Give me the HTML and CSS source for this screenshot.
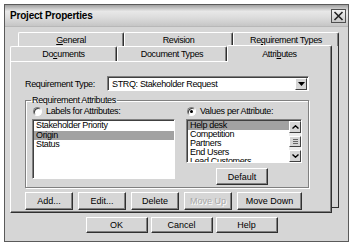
FILE: index.html
```html
<!DOCTYPE html>
<html lang="en">
<head>
    <meta charset="UTF-8">
    <title>Project Properties</title>
    <link rel="stylesheet" href="styles.css">
</head>
<body>
    <div class="window">
        <div class="titlebar">
            <span class="title">Project Properties</span>
            <span class="close">
                <svg width="11" height="10" viewBox="0 0 11 10"><path d="M1.5 1 L9.5 9 M9.5 1 L1.5 9" stroke="#222" stroke-width="1.6" fill="none"/></svg>
            </span>
        </div>
        <div class="dialog">
            <div class="tabset">
                <div class="tabrow back">
                    <div class="tab tab-general"><span><u>G</u>eneral</span></div>
                    <div class="tab tab-revision"><span>Revision</span></div>
                    <div class="tab tab-types"><span>Re<u>q</u>uirement Types</span></div>
                </div>
                <div class="stack">
                    <div class="tabrow front">
                        <div class="tab tab-docs"><span>Do<u>c</u>uments</span></div>
                        <div class="tab tab-doctypes"><span>Document Types</span></div>
                        <div class="tab tab-attrs selected"><span>Attri<u>b</u>utes</span></div>
                    </div>
                    <div class="panel">
                        <div class="req-row">
                            <label class="req-label">Requirement Type:</label>
                            <div class="combo">
                                <span class="combo-text">STRQ: Stakeholder Request</span>
                                <span class="combo-btn">
                                    <svg width="7" height="4" viewBox="0 0 7 4"><path d="M0 0 H7 L3.5 4 Z" fill="#000"/></svg>
                                </span>
                            </div>
                        </div>
                        <fieldset class="group">
                            <legend>Requirement Attributes</legend>
                            <div class="group-cols">
                                <div class="col col-left">
                                    <div class="radio-row"><span class="radio"></span>Labels for Attributes:</div>
                                    <div class="listbox list-left">
                                        <div class="item">Stakeholder Priority</div>
                                        <div class="item selected">Origin</div>
                                        <div class="item">Status</div>
                                    </div>
                                </div>
                                <div class="col col-right">
                                    <div class="radio-row"><span class="radio checked"></span>Values per Attribute:</div>
                                    <div class="listbox list-right">
                                        <div class="list-items">
                                            <div class="item selected">Help desk</div>
                                            <div class="item">Competition</div>
                                            <div class="item">Partners</div>
                                            <div class="item">End Users</div>
                                            <div class="item">Lead Customers</div>
                                        </div>
                                        <div class="scrollbar">
                                            <span class="sb-btn"><svg width="7" height="4" viewBox="0 0 7 4"><path d="M0.5 3.5 L3.5 0.8 L6.5 3.5" stroke="#000" stroke-width="1.4" fill="none"/></svg></span>
                                            <span class="sb-track"><span class="sb-thumb"><svg width="5" height="5" viewBox="0 0 5 5"><path d="M0 0.5 H5 M0 2.5 H5 M0 4.5 H5" stroke="#666" stroke-width="1"/></svg></span></span>
                                            <span class="sb-btn"><svg width="7" height="4" viewBox="0 0 7 4"><path d="M0.5 0.5 L3.5 3.2 L6.5 0.5" stroke="#000" stroke-width="1.4" fill="none"/></svg></span>
                                        </div>
                                    </div>
                                    <div class="default-row">
                                        <button class="btn btn-default">Default</button>
                                    </div>
                                </div>
                            </div>
                        </fieldset>
                        <div class="action-row">
                            <button class="btn btn-small">Add...</button>
                            <button class="btn btn-small">Edit...</button>
                            <button class="btn btn-small">Delete</button>
                            <button class="btn btn-small" disabled>Move Up</button>
                            <button class="btn btn-wide">Move Down</button>
                        </div>
                    </div>
                </div>
            </div>
            <div class="dialog-buttons">
                <button class="btn btn-dialog">OK</button>
                <button class="btn btn-dialog">Cancel</button>
                <button class="btn btn-dialog">Help</button>
            </div>
        </div>
    </div>
</body>
</html>
```

FILE: styles.css
```css
* {
    box-sizing: border-box;
}
body {
    margin: 0;
    background: #fff;
    font-family: "Liberation Sans", Arial, sans-serif;
    font-size: 9px;
    letter-spacing: -0.35px;
    color: #000;
}
.window {
    margin: 4px;
    width: 345px;
    height: 238px;
    border: 1px solid #5a5a5a;
    background: #d6d6d6;
    display: flex;
    flex-direction: column;
}
.titlebar {
    height: 22px;
    padding: 0 2px 0 5px;
    display: flex;
    align-items: center;
    justify-content: space-between;
    background: linear-gradient(#a0a0a0, #e8e8e8 30%, #dcdcdc 60%, #c6c6c6);
    border-bottom: 1px solid #b8b8b8;
}
.title {
    font: bold 10px "Liberation Sans", sans-serif;
    letter-spacing: -0.2px;
}
.close {
    width: 15px;
    height: 14px;
    border: 1px solid #505050;
    background: linear-gradient(#f2f2f2, #c8c8c8);
    display: flex;
    align-items: center;
    justify-content: center;
}
.dialog {
    flex: 1;
    padding: 5px 0 0 5px;
    display: flex;
    flex-direction: column;
}
.tabset {
    width: 329px;
}
.tabrow {
    display: flex;
    height: 14px;
}
.tabrow.back {
    margin-left: 8px;
    position: relative;
    z-index: 1;
}
.tabrow.front {
    height: 15px;
    position: relative;
    z-index: 1;
}
.tab {
    display: flex;
    align-items: center;
    justify-content: center;
    background: #d6d6d6;
    border-top: 1px solid #fff;
    border-left: 1px solid #fff;
    border-right: 1px solid #303030;
    border-radius: 2px 2px 0 0;
    box-shadow: inset -1px 0 #808080;
}
.tab-general { width: 106px; }
.tab-revision { width: 109px; }
.tab-types { width: 106px; }
.tab-docs { width: 107px; }
.tab-doctypes { width: 110px; }
.tab-attrs { width: 105px; }
.tab.selected {
    height: 17px;
    margin-top: -1px;
}
.stack {
    width: 322px;
    box-shadow: 6px -6px 0 #d6d6d6, 7px -5px 0 #303030;
}
.panel {
    height: 152px;
    border: 1px solid;
    border-color: #fff #303030 #303030 #fff;
    box-shadow: inset -1px -1px #808080;
    padding: 14px 0 0 14px;
}
.req-row {
    display: flex;
    align-items: center;
}
.req-label {
    width: 82px;
}
.combo {
    width: 202px;
    height: 15px;
    background: #fff;
    border: 1px solid;
    border-color: #808080 #fff #fff #808080;
    box-shadow: inset 1px 1px #404040;
    display: flex;
    align-items: center;
    justify-content: space-between;
    padding: 1px 1px 1px 4px;
}
.combo-btn {
    width: 12px;
    height: 12px;
    background: #d6d6d6;
    border: 1px solid;
    border-color: #fff #404040 #404040 #fff;
    display: flex;
    align-items: center;
    justify-content: center;
}
.group {
    margin: 4px 0 0 0;
    width: 284px;
    height: 93px;
    padding: 0 6px;
    border: 1px solid #808080;
    box-shadow: 1px 1px 0 #fff, inset 1px 1px 0 #fff;
}
.group legend {
    padding: 0 1px;
    margin-left: -1px;
}
.group-cols {
    display: flex;
    margin-top: 1px;
}
.col-left {
    width: 143px;
}
.col-right {
    width: 116px;
    margin-left: 11px;
}
.radio-row {
    display: flex;
    align-items: center;
    height: 10px;
    padding-left: 1px;
    margin-bottom: 3px;
}
.radio {
    width: 9px;
    height: 9px;
    border-radius: 50%;
    background: #fff;
    border: 1px solid;
    border-color: #808080 #fff #fff #808080;
    box-shadow: inset 1px 1px #404040;
    margin-right: 4px;
    display: flex;
    align-items: center;
    justify-content: center;
}
.radio.checked::after {
    content: "";
    width: 3px;
    height: 3px;
    border-radius: 50%;
    background: #000;
}
.listbox {
    background: #fff;
    border: 1px solid;
    border-color: #808080 #fff #fff #808080;
    box-shadow: inset 1px 1px #404040;
    padding: 1px 0 0 1px;
    line-height: 9.5px;
    overflow: hidden;
}
.list-left {
    height: 60px;
}
.list-right {
    height: 44px;
    display: flex;
    line-height: 9px;
}
.list-items {
    flex: 1;
    overflow: hidden;
}
.item {
    padding-left: 2px;
    white-space: nowrap;
}
.item.selected {
    background: #a2a2a2;
}
.scrollbar {
    width: 12px;
    display: flex;
    flex-direction: column;
    background: #ececec;
}
.sb-btn {
    height: 12px;
    background: #d6d6d6;
    border: 1px solid;
    border-color: #fff #404040 #404040 #fff;
    display: flex;
    align-items: center;
    justify-content: center;
}
.sb-track {
    flex: 1;
    display: flex;
    flex-direction: column;
    padding-top: 3px;
}
.sb-thumb {
    height: 11px;
    background: #d6d6d6;
    border: 1px solid;
    border-color: #fff #404040 #404040 #fff;
    display: flex;
    align-items: center;
    justify-content: center;
}
.default-row {
    display: flex;
    justify-content: center;
    margin-top: 5px;
    padding-right: 4px;
}
.btn {
    font: inherit;
    color: #000;
    background: #d6d6d6;
    border: 1px solid;
    border-color: #fff #303030 #303030 #fff;
    box-shadow: inset -1px -1px #808080;
    padding: 0;
    border-radius: 0;
}
.btn:disabled {
    color: #a8a8a8;
    text-shadow: 1px 1px #fff;
}
.btn-default {
    width: 52px;
    height: 17px;
}
.action-row {
    display: flex;
    gap: 5px;
    margin-top: 4px;
}
.btn-small {
    width: 48px;
    height: 18px;
}
.btn-wide {
    width: 65px;
    height: 18px;
}
.dialog-buttons {
    display: flex;
    justify-content: center;
    gap: 3px;
    margin-top: 4px;
    padding-left: 5px;
}
.btn-dialog {
    width: 62px;
    height: 16px;
}
```
